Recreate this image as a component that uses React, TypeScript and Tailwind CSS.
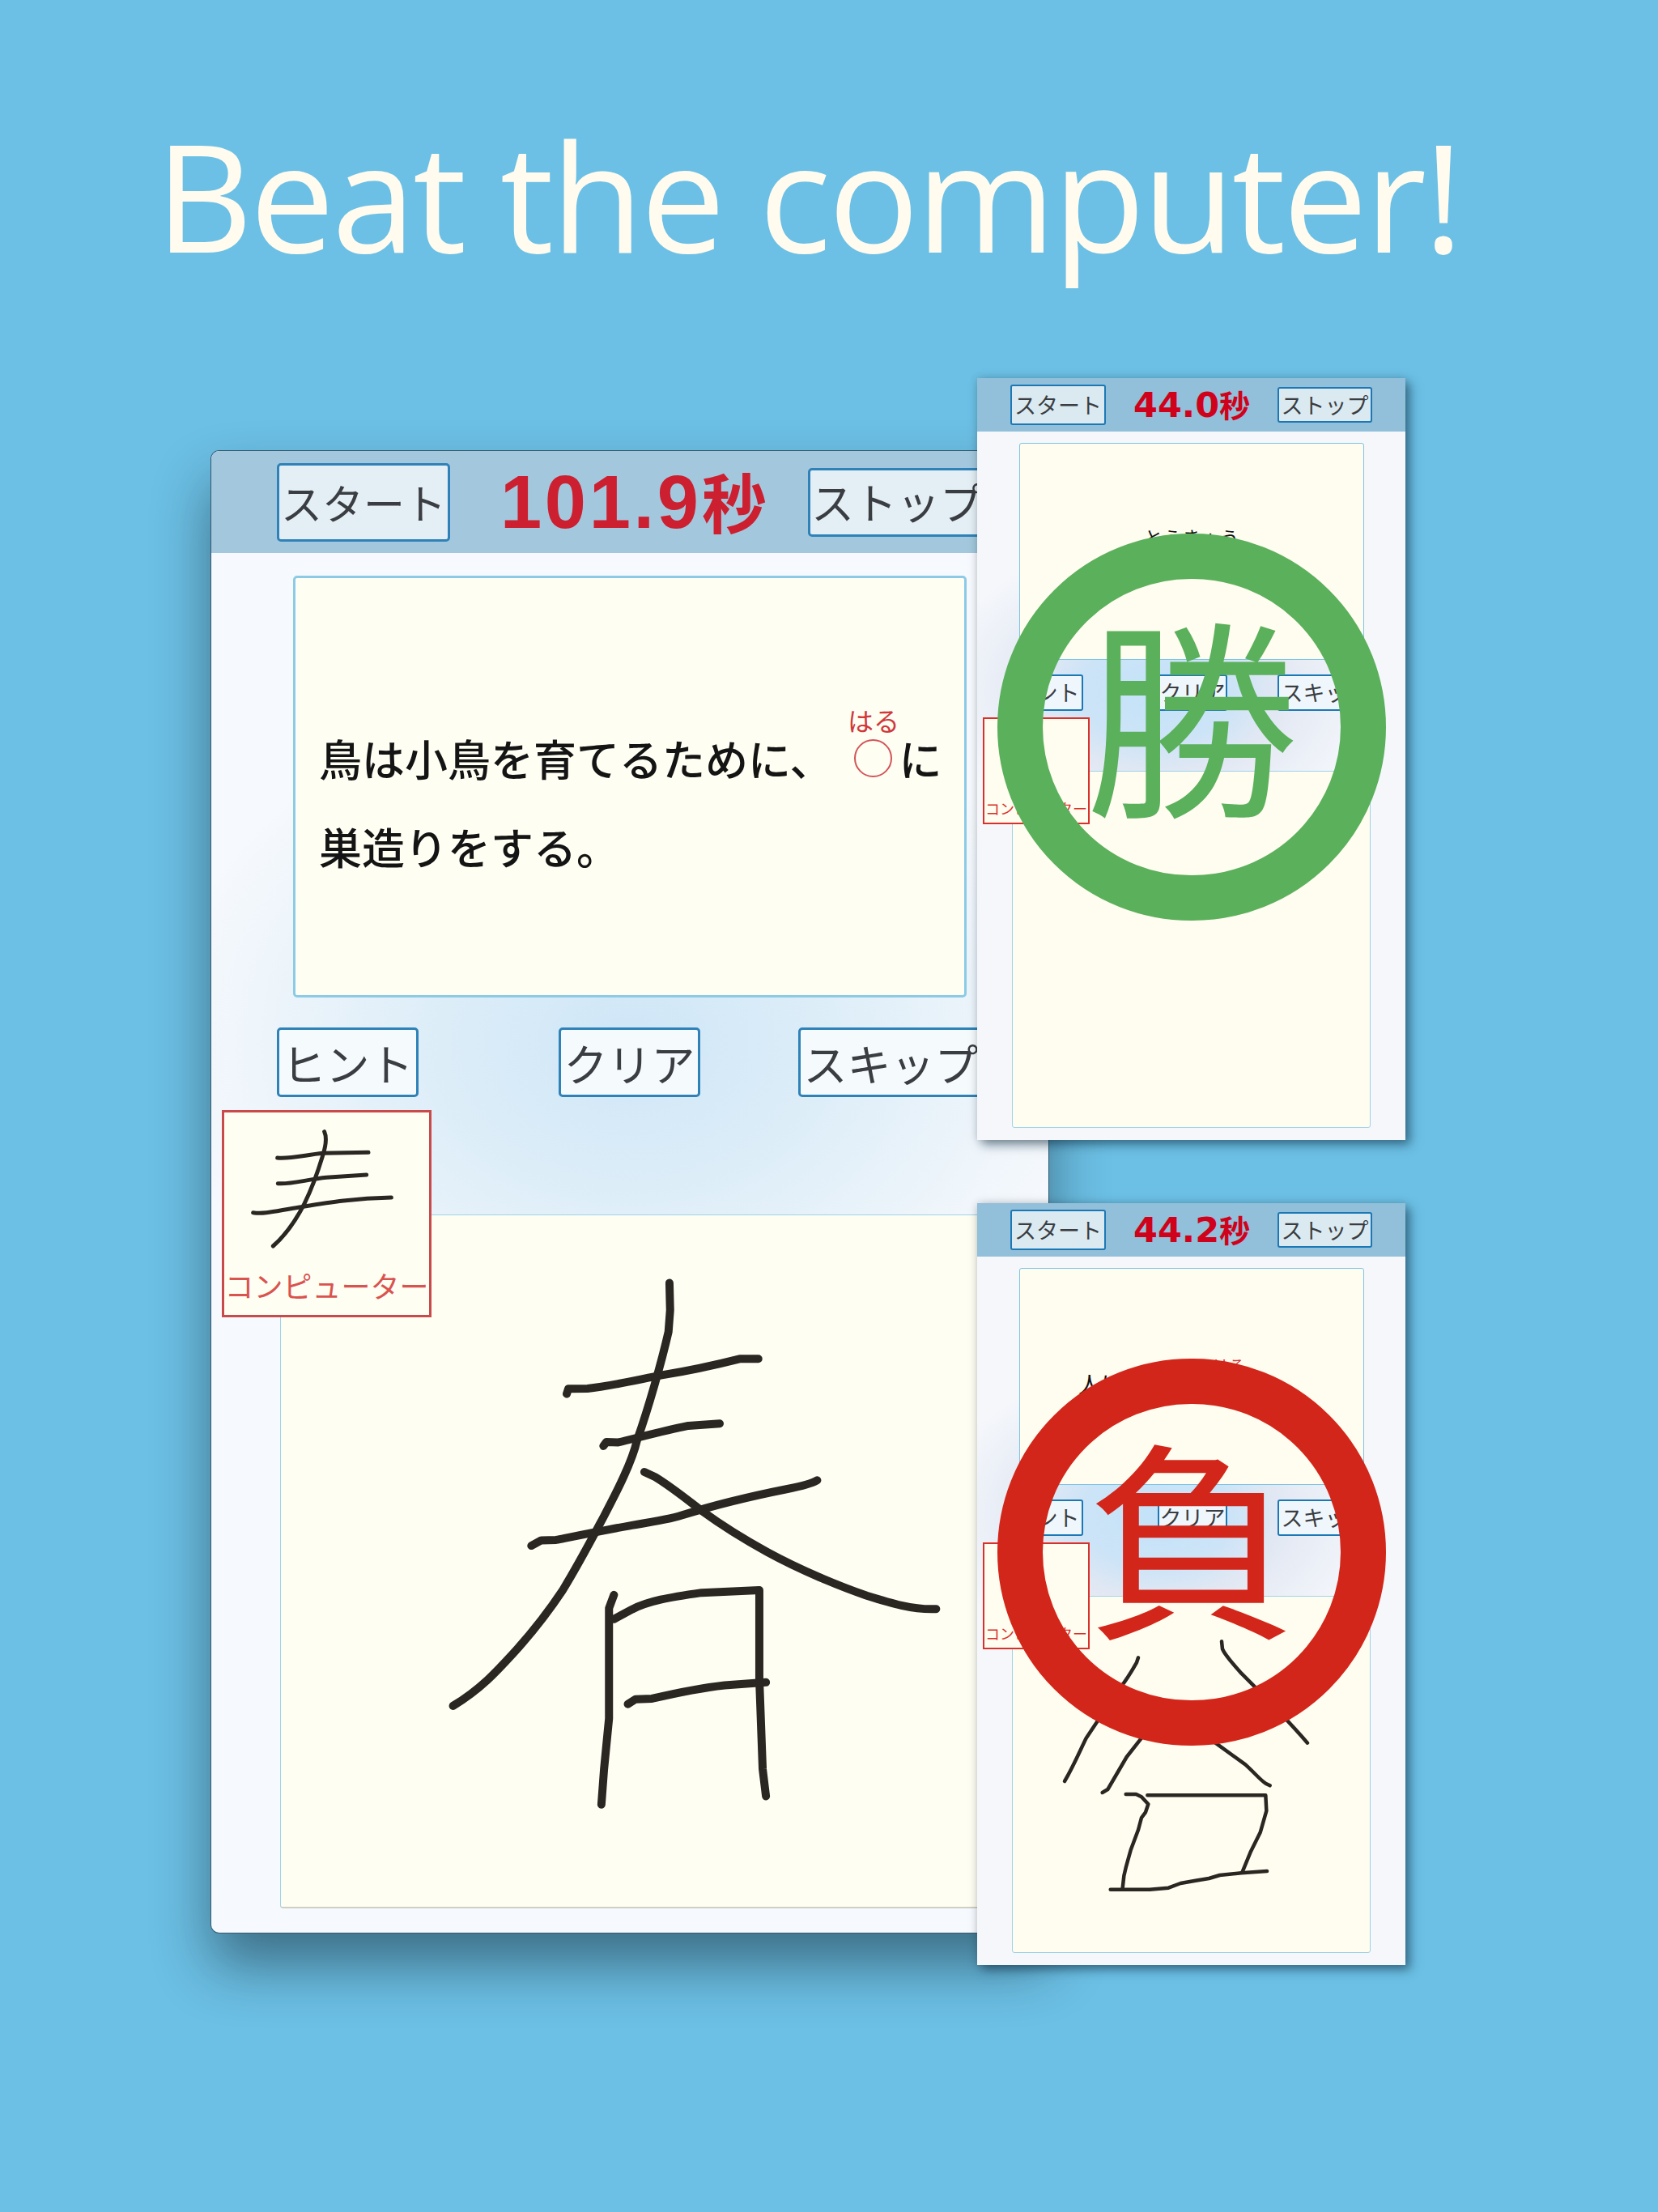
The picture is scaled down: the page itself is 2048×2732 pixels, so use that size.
import React from 'react';

const INK = '#2a2723';

const Btn: React.FC<{ className: string; children: React.ReactNode }> = ({ className, children }) => (
  <div className={`flex items-center justify-center shrink-0 whitespace-nowrap text-[#3a3d42] ${className}`}>{children}</div>
);

// hand drawn strokes, coordinates are taken 1:1 off the reference crops
const Strokes: React.FC<{ paths: string[]; width: number; view: string; className: string }> = ({ paths, width, view, className }) => (
  <svg viewBox={view} preserveAspectRatio="none" className={className} fill="none" stroke={INK} strokeLinecap="round" strokeLinejoin="round">
    {paths.map((d, i) => (
      <path key={i} d={d} strokeWidth={width} vectorEffect="non-scaling-stroke" />
    ))}
  </svg>
);

const haru = [
  'M703 55 L705 130 L700 190 C680 270 640 400 605 490 C590 550 545 630 505 700 C470 760 430 830 380 905 C340 960 290 1020 230 1080 C180 1130 130 1180 48 1225',
  'M392 362 L397 348 L455 347 C530 340 620 320 680 310 C760 298 850 280 915 265 L972 265',
  'M503 506 L512 495 L548 496 C600 485 680 465 760 450 L855 444',
  'M285 782 L315 767 L360 766 C420 755 500 740 580 727 C640 718 700 710 740 698 C820 675 950 645 1060 625 C1100 618 1130 612 1150 601',
  'M627 578 L660 592 C710 620 750 650 800 685 C860 725 920 760 1000 800 C1100 850 1220 895 1300 920 C1370 940 1440 960 1510 957',
  'M535 918 L520 955 L520 1260 L505 1400 L497 1498',
  'M535 985 L590 958 C640 935 700 925 800 912 L975 905 L975 1150 L985 1400 L995 1475',
  'M577 1220 L600 1207 L650 1205 C720 1190 800 1175 870 1168 L995 1160',
];

const cpuHaru = [
  'M392 98 C402 120 398 150 385 190 C370 240 345 310 318 365 C290 420 250 480 202 522',
  'M218 195 C260 200 320 185 385 178 L555 175',
  'M220 290 C260 295 330 275 400 268 L548 258',
  'M128 398 C170 405 220 390 300 378 C400 362 500 345 640 342',
];

const lowerStrokes = [
  'M318 82 L312 100 C295 130 270 170 250 195 L165 320 L125 380 C105 420 80 480 45 540',
  'M627 22 L630 50 C640 75 670 105 700 140 C740 180 860 300 945 398',
  'M185 582 L205 570 L275 450 L330 380',
  'M600 395 L715 478 C750 510 770 535 790 548 L806 556',
  'M272 588 L310 588 L330 598 L355 625 L345 655 L330 675 L318 720 L290 795 L272 860 L265 890 L260 935',
  'M352 592 L790 592 L793 650 L770 730 L735 800 L703 878',
  'M215 941 L360 941 L430 935 L475 918 L530 908 L580 900 L620 888 L700 880 L795 873',
];

const smallBtn = 'h-[45px] border-2 border-[#1b78b5] rounded-[3px] text-[27px] bg-[#f0f7fc]';
const mainBtn = 'h-[86px] border-[3px] border-[#2f82b8] rounded-[5px] text-[54px] bg-[#f5fafd]';

const SmallWindow: React.FC<{
  className: string;
  time: string;
  question: React.ReactNode;
  drawing?: React.ReactNode;
  ringClass: string;
  markClass: string;
  mark: string;
}> = ({ className, time, question, drawing, ringClass, markClass, mark }) => (
  <div className={`absolute left-[1207px] w-[529px] h-[941px] flex flex-col shadow-[6px_6px_12px_rgba(10,40,60,0.5),0_0_10px_rgba(0,0,0,0.15)] bg-[radial-gradient(ellipse_52%_20%_at_42%_41%,#c3e2f8_0%,#cde4f7_35%,#e2e8f3_55%,#f5f7fb_100%)] ${className}`}>
    <div className="h-[66px] shrink-0 bg-[#92bfd9] flex items-center pl-[41px]">
      <Btn className="w-[118px] h-[50px] border-2 border-[#1b78b5] rounded-[3px] text-[27px] bg-[#dbeaf1]">スタート</Btn>
      <div className="w-[212px] pl-[34px] flex items-baseline text-[#d0021b] font-bold">
        <span className="font-['DejaVu_Sans',sans-serif] text-[43px] leading-none">{time}</span>
        <span className="text-[38px] leading-none">秒</span>
      </div>
      <Btn className="w-[117px] h-[44px] border-2 border-[#1b78b5] rounded-[3px] text-[27px] bg-[#dbeaf1]">ストップ</Btn>
    </div>
    <div className="mt-[14px] ml-[52px] w-[426px] h-[268px] shrink-0 bg-[#fffcf0] border border-[#7cc5e6] rounded-[3px]">{question}</div>
    <div className="mt-[18px] ml-[41px] flex">
      <Btn className={`w-[90px] ${smallBtn}`}>ヒント</Btn>
      <Btn className={`ml-[92px] w-[86px] ${smallBtn}`}>クリア</Btn>
      <Btn className={`ml-[62px] w-[117px] ${smallBtn}`}>スキップ</Btn>
    </div>
    <div className="relative mt-[74px] ml-[43px] w-[443px] h-[441px] shrink-0 bg-[#fffcf0] border border-[#9ed3ea] rounded-[3px]">{drawing}</div>
    <div className="absolute left-[7px] top-[419px] w-[132px] h-[132px] flex flex-col justify-end items-center pb-[6px] bg-[#fffcf0] border-2 border-[#d9302a] text-[#d9302a] text-[18px] leading-[24px] whitespace-nowrap">コンピューター</div>
    <div className={`absolute left-[25px] top-[192px] w-[480px] h-[478px] rounded-full border-[56px] flex items-center justify-center ${ringClass}`}>
      <span className={`text-[262px] leading-none whitespace-nowrap ${markClass}`}>{mark}</span>
    </div>
  </div>
);

const App: React.FC = () => (
  <div className="relative w-[2048px] h-[2732px] overflow-hidden bg-[#6cc0e5] font-['Noto_Sans_CJK_JP',sans-serif]">
    <h1 className="pt-[110px] pl-[192px] font-['Open_Sans',sans-serif] text-[186px] leading-[260px] tracking-[-0.018em] text-[#fffbee] whitespace-nowrap">Beat the computer!</h1>

    <div className="absolute left-[261px] top-[557px] w-[1034px] h-[1830px] flex flex-col rounded-[10px] ring-1 ring-[#335a70] shadow-[0_40px_70px_rgba(10,20,30,0.48)] bg-[radial-gradient(ellipse_56%_24%_at_50%_40%,#cfe6f7_0%,#dcedf8_40%,#eaf3fa_70%,#f6f9fd_100%)]">
      <div className="h-[126px] shrink-0 bg-[#a3c8de] rounded-t-[10px] flex items-center pl-[81px]">
        <Btn className="w-[214px] h-[97px] border-[3px] border-[#2f82b8] rounded-[5px] text-[51px] bg-[#e3eef5]">スタート</Btn>
        <div className="w-[442px] pl-[62px] flex items-baseline text-[#cc2030] font-bold">
          <span className="font-['Liberation_Sans',sans-serif] text-[92px] leading-none tracking-[0.04em]">101.9</span>
          <span className="text-[80px] leading-none">秒</span>
        </div>
        <Btn className="w-[220px] h-[85px] border-[3px] border-[#2f82b8] rounded-[5px] text-[53px] bg-[#e3eef5]">ストップ</Btn>
      </div>

      <div className="mt-[28px] ml-[101px] w-[832px] h-[521px] shrink-0 pt-[168px] pl-[29px] bg-[#fffef3] border-[3px] border-[#8ccbe6] rounded-[5px] text-[53px] font-medium text-[#141414]">
        <div className="flex items-center h-[109px] whitespace-nowrap">
          <span>鳥は小鳥を育てるために、</span>
          <span className="relative ml-[27px] w-[47px] h-[47px] rounded-full border-2 border-[#d4545a] shrink-0">
            <span className="absolute left-1/2 -translate-x-1/2 -top-[45px] text-[32px] leading-[38px] font-normal text-[#d0383c]">はる</span>
          </span>
          <span className="ml-[8px]">に</span>
        </div>
        <div className="h-[109px] leading-[109px] whitespace-nowrap">巣造りをする。</div>
      </div>

      <div className="mt-[37px] ml-[81px] flex">
        <Btn className={`w-[175px] ${mainBtn}`}>ヒント</Btn>
        <Btn className={`ml-[173px] w-[175px] ${mainBtn}`}>クリア</Btn>
        <Btn className={`ml-[121px] w-[229px] ${mainBtn}`}>スキップ</Btn>
      </div>

      <div className="relative mt-[145px] ml-[85px] w-[866px] h-[857px] shrink-0 bg-[#fffef3] border border-[#9ed3ea] border-b-2 border-b-[#cfcfc4] rounded-[4px]">
        <Strokes paths={haru} width={10} view="0 0 1568 1568" className="absolute left-[193px] top-[59px] w-[640px] h-[700px]" />
      </div>

      <div className="absolute left-[13px] top-[814px] w-[259px] h-[256px] flex flex-col justify-end items-center pb-[13px] bg-[#fffef3] border-[3px] border-[#c94a4a] text-[#d9534f] text-[36px] leading-[48px] whitespace-nowrap">
        <Strokes paths={cpuHaru} width={5} view="0 0 810 810" className="absolute -left-[7px] -top-[9px] w-[270px] h-[270px]" />
        コンピューター
      </div>
    </div>

    <SmallWindow
      className="top-[467px]"
      time="44.0"
      ringClass="border-[#5bb05c] text-[#5bb05c]"
      markClass="-translate-y-[22px]"
      mark="勝"
      question={<div className="pt-[100px] text-center text-[23px] leading-[30px] tracking-[0.02em] text-[#111]">とうきょう</div>}
    />
    <SmallWindow
      className="top-[1486px]"
      time="44.2"
      ringClass="border-[#d3261a] text-[#d3261a]"
      markClass="-translate-y-[27px]"
      mark="負"
      question={
        <div className="relative h-full pt-[122px] pl-[72px] text-[28px] leading-[40px] text-[#111]">
          人は
          <span className="absolute left-[238px] top-[108px] text-[20px] leading-[24px] text-[#d0383c]">はる</span>
        </div>
      }
      drawing={<Strokes paths={lowerStrokes} width={4.5} view="0 0 1020 1020" className="absolute left-[49px] top-[48px] w-[340px] h-[340px]" />}
    />
  </div>
);

export default App;
